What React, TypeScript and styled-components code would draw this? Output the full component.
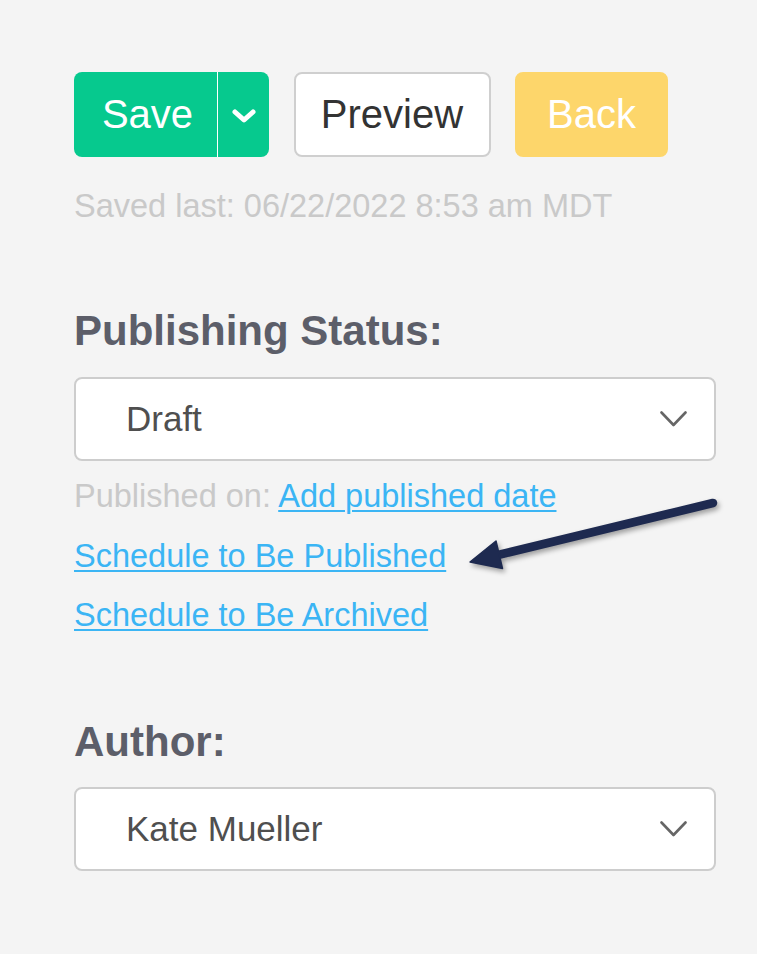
import React from "react";
import styled, { createGlobalStyle } from "styled-components";

const GlobalStyle = createGlobalStyle`
  *, *::before, *::after { box-sizing: border-box; }
  html, body { margin: 0; padding: 0; background: #f4f4f4; }
  body { font-family: "Liberation Sans", Arial, sans-serif; }
`;

const Page = styled.div`
  position: relative;
  min-height: 954px;
  padding: 72px 41px 0 74px;
  background: #f4f4f4;
`;

const Toolbar = styled.div`
  display: flex;
  gap: 24.5px;
  height: 85px;
`;

const SplitButton = styled.div`
  display: flex;
  width: 195px;
  border-radius: 8px;
  overflow: hidden;
  background: #06c98e;
`;

const SplitMain = styled.button`
  flex: 0 0 143px;
  display: flex;
  align-items: center;
  justify-content: center;
  border: 0;
  background: transparent;
  color: #ffffff;
  font-family: inherit;
  font-size: 40px;
  padding: 0 0 0 4px;
  cursor: pointer;
`;

const SplitToggle = styled.button`
  flex: 1;
  display: flex;
  align-items: center;
  justify-content: center;
  border: 0;
  border-left: 1px solid #ffffff;
  background: transparent;
  padding: 3px 0 0 0;
  cursor: pointer;
`;

const Button = styled.button<{ $variant: "light" | "warn"; $w: number }>`
  width: ${(p) => p.$w}px;
  display: flex;
  align-items: center;
  justify-content: center;
  border-radius: 8px;
  font-family: inherit;
  font-size: 40px;
  padding: 0;
  cursor: pointer;
  border: 2px solid ${(p) => (p.$variant === "light" ? "#cfcfcf" : "#fdd66b")};
  background: ${(p) => (p.$variant === "light" ? "#ffffff" : "#fdd66b")};
  color: ${(p) => (p.$variant === "light" ? "#333333" : "#ffffff")};
`;

const SavedNote = styled.div`
  margin-top: 29px;
  font-size: 32.5px;
  line-height: 40px;
  color: #c9c9c9;
`;

const Section = styled.section<{ $top: number }>`
  margin-top: ${(p) => p.$top}px;
`;

const Heading = styled.h2`
  margin: 0;
  font-size: 42px;
  line-height: 48px;
  font-weight: 700;
  color: #5c5e69;
`;

const Select = styled.div<{ $top: number }>`
  margin-top: ${(p) => p.$top}px;
  height: 84px;
  display: flex;
  align-items: center;
  justify-content: space-between;
  padding: 0 27px 0 50px;
  background: #ffffff;
  border: 2px solid #cdcdcd;
  border-radius: 8px;
  font-size: 35px;
  color: #4f4f4f;
`;

const MetaList = styled.div`
  margin-top: 15px;
  display: flex;
  flex-direction: column;
  gap: 19.5px;
`;

const MetaLine = styled.div`
  font-size: 32.5px;
  line-height: 40px;
  color: #c9c9c9;
  white-space: nowrap;
`;

const Link = styled.a`
  color: #3bb5f4;
  text-decoration: underline;
  text-decoration-thickness: 2px;
  text-underline-offset: 3px;
  cursor: pointer;
`;

const Arrow = styled.svg`
  position: absolute;
  left: 460px;
  top: 490px;
  width: 265px;
  height: 95px;
  overflow: visible;
  filter: drop-shadow(2px 3px 2.5px rgba(0, 0, 0, 0.35));
`;

const SmallChevron = () => (
  <svg width="24" height="14" viewBox="0 0 24 14" aria-hidden="true">
    <path d="M3 3 L12 11 L21 3" fill="none" stroke="#ffffff" strokeWidth="5" strokeLinecap="round" strokeLinejoin="round" />
  </svg>
);

const SelectChevron = () => (
  <svg width="27" height="16" viewBox="0 0 27 16" aria-hidden="true">
    <path d="M1.5 1.5 L13.5 14 L25.5 1.5" fill="none" stroke="#666666" strokeWidth="2.6" strokeLinecap="round" strokeLinejoin="round" />
  </svg>
);

export default function App() {
  return (
    <>
      <GlobalStyle />
      <Page>
        <Toolbar>
          <SplitButton>
            <SplitMain>Save</SplitMain>
            <SplitToggle aria-label="More save options">
              <SmallChevron />
            </SplitToggle>
          </SplitButton>
          <Button $variant="light" $w={197}>Preview</Button>
          <Button $variant="warn" $w={153}>Back</Button>
        </Toolbar>
        <SavedNote>Saved last: 06/22/2022 8:53 am MDT</SavedNote>

        <Section $top={81}>
          <Heading>Publishing Status:</Heading>
          <Select $top={22}>
            <span>Draft</span>
            <SelectChevron />
          </Select>
          <MetaList>
            <MetaLine>
              Published on: <Link>Add published date</Link>
            </MetaLine>
            <MetaLine>
              <Link>Schedule to Be Published</Link>
            </MetaLine>
            <MetaLine>
              <Link>Schedule to Be Archived</Link>
            </MetaLine>
          </MetaList>
        </Section>

        <Section $top={83}>
          <Heading>Author:</Heading>
          <Select $top={21}>
            <span>Kate Mueller</span>
            <SelectChevron />
          </Select>
        </Section>

        <Arrow viewBox="0 0 265 95" aria-hidden="true">
          <path d="M253 13 L38 65" stroke="#1e2a50" strokeWidth="8.5" strokeLinecap="round" fill="none" />
          <path d="M10 72 L36 51 L42.5 78.5 Z" fill="#1e2a50" stroke="#1e2a50" strokeWidth="1.5" strokeLinejoin="round" />
        </Arrow>
      </Page>
    </>
  );
}
